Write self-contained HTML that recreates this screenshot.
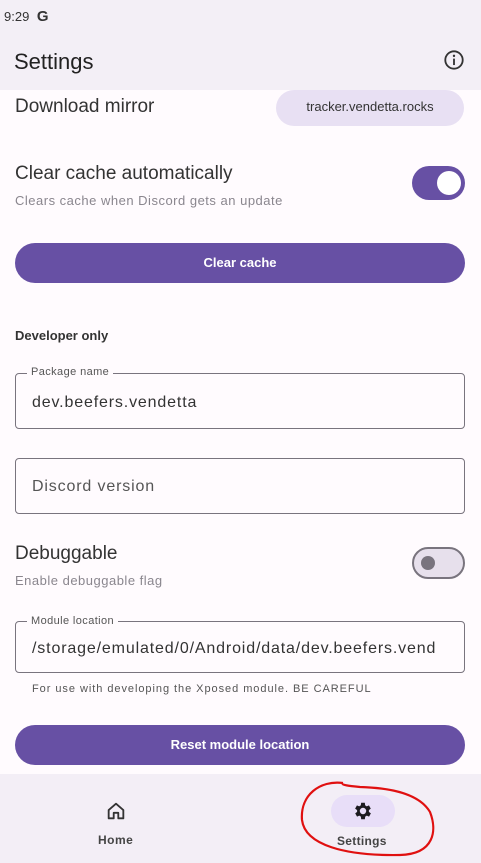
<!DOCTYPE html>
<html><head><meta charset="utf-8">
<style>
*{margin:0;padding:0;box-sizing:border-box}
body{width:481px;height:863px;overflow:hidden;background:#fffbfe;font-family:"Liberation Sans",sans-serif;color:#1c1b1f;position:relative}
.abs{position:absolute}
.topbar{left:0;top:0;width:481px;height:90px;background:#f3eff6}
.btn{left:15px;width:450px;height:40px;border-radius:20px;background:#6750a4;color:#fff;font-size:13px;font-weight:bold;text-align:center;line-height:40px}
.field{left:15px;width:450px;height:56px;border:1px solid #79747e;border-radius:4px}
.lbl{font-size:11px;color:#555;background:#fffbfe;padding:0 4px;letter-spacing:0.4px}
.sub{font-size:13px;color:#8a868e;letter-spacing:0.5px}
.ft{font-size:16px;letter-spacing:0.85px}
</style></head><body>
<div class="abs" style="left:0;top:0;width:481px;height:3px;background:#2a2a3a"></div>
<div class="abs topbar"></div>
<div class="abs" style="left:4px;top:8px;font-size:13px;color:#333">9:29 <b style="font-size:15px;margin-left:4px">G</b></div>
<div class="abs" style="left:14px;top:49px;font-size:22px;color:#222">Settings</div>
<svg class="abs" style="left:443px;top:49px" width="22" height="22" viewBox="0 0 24 24"><circle cx="12" cy="12" r="9.5" fill="none" stroke="#333" stroke-width="2"/><rect x="11" y="10.5" width="2" height="7" fill="#333"/><circle cx="12" cy="7.5" r="1.3" fill="#333"/></svg>

<div class="abs" style="left:15px;top:96px;font-size:19px;color:#333">Download mirror</div>
<div class="abs" style="left:276px;top:90px;width:188px;height:36px;border-radius:18px;background:#e8e0f3;font-size:13px;text-align:center;line-height:34px;color:#333">tracker.vendetta.rocks</div>

<div class="abs" style="left:15px;top:163px;font-size:19px;color:#333">Clear cache automatically</div>
<div class="abs sub" style="left:15px;top:193px">Clears cache when Discord gets an update</div>
<div class="abs" style="left:412px;top:166px;width:53px;height:34px;border-radius:17px;background:#6750a4"></div>
<div class="abs" style="left:437px;top:171px;width:24px;height:24px;border-radius:12px;background:#fff"></div>

<div class="abs btn" style="top:243px">Clear cache</div>

<div class="abs" style="left:15px;top:328px;font-size:13px;font-weight:bold;color:#333">Developer only</div>

<div class="abs field" style="top:373px"></div>
<div class="abs lbl" style="left:27px;top:366px">Package name</div>
<div class="abs ft" style="left:32px;top:394px;color:#333">dev.beefers.vendetta</div>

<div class="abs field" style="top:458px"></div>
<div class="abs ft" style="left:32px;top:478px;color:#555">Discord version</div>

<div class="abs" style="left:15px;top:543px;font-size:19px;color:#333">Debuggable</div>
<div class="abs sub" style="left:15px;top:573px">Enable debuggable flag</div>
<div class="abs" style="left:412px;top:547px;width:53px;height:32px;border-radius:16px;background:#e7e0ec;border:2px solid #79747e"></div>
<div class="abs" style="left:421px;top:556px;width:14px;height:14px;border-radius:7px;background:#79747e"></div>

<div class="abs field" style="top:621px;height:52px"></div>
<div class="abs lbl" style="left:27px;top:615px">Module location</div>
<div class="abs ft" style="left:32px;top:640px;color:#333;white-space:nowrap;width:420px;overflow:hidden">/storage/emulated/0/Android/data/dev.beefers.vend</div>
<div class="abs" style="left:32px;top:683px;font-size:11px;color:#555;letter-spacing:0.95px">For use with developing the Xposed module. BE CAREFUL</div>

<div class="abs btn" style="top:725px">Reset module location</div>

<div class="abs" style="left:0;top:774px;width:481px;height:89px;background:#f3eef6"></div>
<svg class="abs" style="left:105px;top:800px" width="22" height="22" viewBox="0 0 24 24"><path d="M4 11 L12 4 L20 11 V20 H14.5 V14 H9.5 V20 H4 Z" fill="none" stroke="#333" stroke-width="2" stroke-linejoin="round"/></svg>
<div class="abs" style="left:98px;top:833px;font-size:12px;font-weight:bold;color:#444;letter-spacing:0.5px">Home</div>
<div class="abs" style="left:331px;top:795px;width:64px;height:32px;border-radius:16px;background:#e8def8"></div>
<svg class="abs" style="left:352px;top:800px" width="22" height="22" viewBox="0 0 24 24"><path fill="#1c1b1f" d="M19.4 13a7.5 7.5 0 0 0 0-2l2.1-1.6-2-3.5-2.5 1a7 7 0 0 0-1.7-1L15 3h-4l-.4 2.9a7 7 0 0 0-1.7 1l-2.5-1-2 3.5L6.6 11a7.5 7.5 0 0 0 0 2l-2.1 1.6 2 3.5 2.5-1a7 7 0 0 0 1.7 1L11 21h4l.4-2.9a7 7 0 0 0 1.7-1l2.5 1 2-3.5zM13 15.5A3.5 3.5 0 1 1 13 8.5a3.5 3.5 0 0 1 0 7z" transform="translate(-1 0)"/></svg>
<div class="abs" style="left:337px;top:834px;font-size:12px;font-weight:bold;color:#444;letter-spacing:0.3px">Settings</div>
<svg class="abs" style="left:0;top:760px" width="481" height="103" viewBox="0 0 481 103"><path d="M343 23 C320 20 300 35 302 60 C305 85 345 96 400 95 C435 94 437 70 430 52 C420 35 395 28 360 27 C350 26 340 25 343 23" fill="none" stroke="#e01010" stroke-width="2.2"/></svg>
</body></html>
